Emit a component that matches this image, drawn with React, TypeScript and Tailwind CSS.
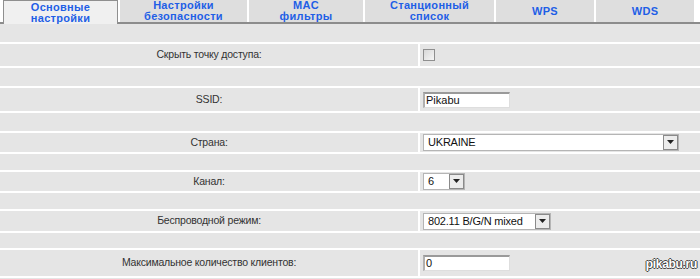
const tabs = [
  { lines: ["Основные", "настройки"], width: "w-[115px]", active: true },
  { lines: ["Настройки", "безопасности"], width: "w-[127px]" },
  { lines: ["MAC", "фильтры"], width: "w-[114px]" },
  { lines: ["Станционный", "список"], width: "w-[129px]" },
  { lines: ["WPS"], width: "w-[98px]" },
  { lines: ["WDS"], width: "w-[98px]" },
];

function Arrow() {
  return (
    <span className="flex h-[15px] w-[15px] items-center justify-center border border-[#8a8a8a] bg-[#ececec]">
      <svg width="7" height="5" viewBox="0 0 7 5">
        <path d="M0 0h7L3.5 4z" fill="#222" />
      </svg>
    </span>
  );
}

function Select({ value, width }: { value: string; width: string }) {
  return (
    <div className={`flex h-[17px] items-center border border-[#b5b5b5] bg-white pl-[4px] ${width}`}>
      <span className="flex-1 leading-none tracking-[-0.2px] text-[#111]">{value}</span>
      <Arrow />
    </div>
  );
}

function TextBox({ value }: { value: string }) {
  return (
    <div className="flex h-[16px] w-[87px] items-center border-t-2 border-l-2 border-t-[#9a9a9a] border-l-[#b0b0b0] border-r border-b border-r-[#dedede] border-b-[#dedede] bg-white pl-[1px] leading-none text-[#111]">
      {value}
    </div>
  );
}

function Spacer({ h }: { h: string }) {
  return <div className={`bg-[#e5e5e5] ${h}`} />;
}

function Row({ label, h, children }: { label: string; h: string; children: React.ReactNode }) {
  return (
    <div className={`flex gap-[2px] ${h}`}>
      <div className="flex w-[418px] items-center justify-center bg-[#e5e5e5] text-[10.5px] tracking-[-0.2px] text-[#333]">
        {label}
      </div>
      <div className="flex flex-1 items-center bg-[#e5e5e5] pl-[3px]">{children}</div>
    </div>
  );
}

export default function App() {
  return (
    <div className="relative h-[279px] w-[700px] overflow-hidden bg-white font-['Liberation_Sans',Arial,sans-serif] text-[11px]">
      <div className="flex h-[24px] gap-[2px] border-b-2 border-[#8c8c8c] pl-[3px]">
        {tabs.map((t) => (
          <div
            key={t.lines[0]}
            className={`flex flex-col items-center justify-center text-[11px] font-bold leading-[11px] tracking-[0.3px] text-[#1f5fe6] ${t.width} ${
              t.active
                ? "-mb-[2px] h-[24px] border-x border-t border-[#8f8f8f] bg-[#f0f0f0]"
                : "h-[22px] bg-[#dedede]"
            }`}
          >
            {t.lines.map((l) => (
              <span key={l}>{l}</span>
            ))}
          </div>
        ))}
      </div>

      <div className="flex flex-col gap-[2px]">
        <Spacer h="h-[18px]" />
        <Row label="Скрыть точку доступа:" h="h-[22px]">
          <span className="h-[12px] w-[12px] border border-[#8f8f8f] bg-gradient-to-br from-[#d8d8d8] to-[#f6f6f6]" />
        </Row>
        <Spacer h="h-[18px]" />
        <Row label="SSID:" h="h-[23px]">
          <TextBox value="Pikabu" />
        </Row>
        <Spacer h="h-[18px]" />
        <Row label="Страна:" h="h-[19px]">
          <Select value="UKRAINE" width="w-[256px]" />
        </Row>
        <Spacer h="h-[16px]" />
        <Row label="Канал:" h="h-[19px]">
          <Select value="6" width="w-[42px]" />
        </Row>
        <Spacer h="h-[16px]" />
        <Row label="Беспроводной режим:" h="h-[20px]">
          <Select value="802.11 B/G/N mixed" width="w-[128px]" />
        </Row>
        <Spacer h="h-[15px]" />
        <Row label="Максимальное количество клиентов:" h="h-[26px]">
          <TextBox value="0" />
        </Row>
        <Spacer h="h-[10px]" />
      </div>

      <span className="absolute right-[3px] bottom-[6px] text-[12px] font-bold tracking-[-0.3px] text-white [text-shadow:1px_0_0_#444,-1px_0_0_#444,0_1px_0_#444,0_-1px_0_#444]">
        pikabu.ru
      </span>
    </div>
  );
}
